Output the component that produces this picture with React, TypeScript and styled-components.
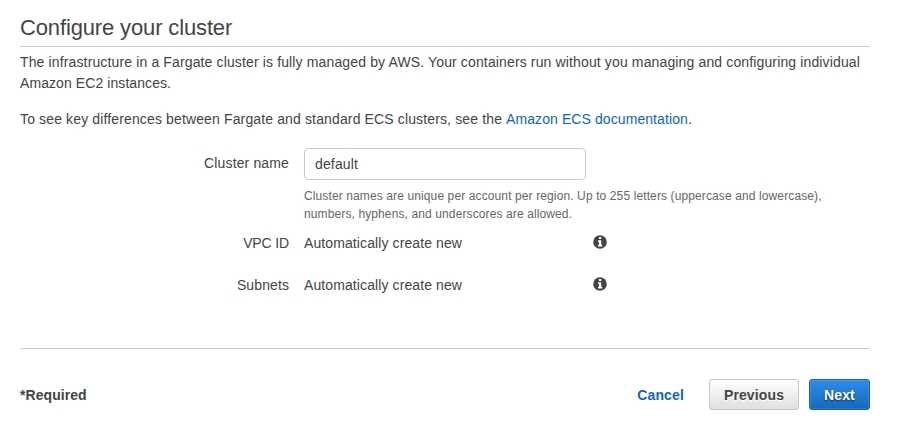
import React from "react";
import styled, { createGlobalStyle } from "styled-components";

const Global = createGlobalStyle`
  * { box-sizing: border-box; }
  body { margin: 0; background: #fff; overflow: hidden; }
`;
const Page = styled.main`
  width: 870px;
  height: 429px;
  padding: 15px 0 0 20px;
  font: 14px/21px "Liberation Sans", Arial, sans-serif;
  color: #444;
`;
const Title = styled.h1`
  margin: 0;
  height: 32px;
  font-size: 22px;
  line-height: 26px;
  font-weight: 400;
  letter-spacing: -0.14px;
  border-bottom: 1px solid #ccc;
`;
const Intro = styled.p<{ $gap: number }>`
  margin: ${(p) => p.$gap}px 0 0;
  letter-spacing: 0.136px;
`;
const Tracked = styled.span<{ $tracking: number }>`
  letter-spacing: ${(p) => p.$tracking}px;
`;
const Link = styled.a`
  color: #0f66bd;
  text-decoration: none;
  letter-spacing: 0.085px;
`;
const Form = styled.form`
  margin: 18px 0 0;
`;
const Row = styled.div<{ $height: number }>`
  display: grid;
  grid-template-columns: 269px 282px 1fr;
  grid-template-rows: max-content;
  align-content: start;
  column-gap: 15px;
  height: ${(p) => p.$height}px;
`;
const Label = styled.label<{ $top?: number; $tracking: number }>`
  text-align: right;
  padding-top: ${(p) => p.$top ?? 0}px;
  letter-spacing: ${(p) => p.$tracking}px;
`;
const Value = styled.span`
  letter-spacing: 0.1px;
`;
const Input = styled.input`
  width: 282px;
  height: 32px;
  padding: 0 10px;
  border: 1px solid #ccc;
  border-radius: 4px;
  font: inherit;
  letter-spacing: 0.14px;
  color: #444;
  outline: none;
`;
const Hint = styled.div`
  grid-column: 2 / 4;
  margin-top: 7px;
  width: 540px;
  font-size: 12px;
  line-height: 18px;
  letter-spacing: 0.115px;
  color: #666;
`;
const InfoCell = styled.span`
  padding-top: 2px;
  margin-left: -8px;
`;
const InfoSvg = styled.svg`
  display: block;
`;
const Footer = styled.footer`
  display: flex;
  align-items: center;
  height: 92px;
  border-top: 1px solid #ccc;
  font-weight: 700;
`;
const Required = styled.span`
  flex: 1;
  padding-top: 2px;
  letter-spacing: 0.06px;
`;
const Cancel = styled(Link)`
  margin-right: 25px;
  padding-top: 2px;
  letter-spacing: 0.14px;
`;
const Button = styled.button<{ $primary?: boolean }>`
  height: 31px;
  width: ${(p) => (p.$primary ? 61 : 90)}px;
  margin-left: ${(p) => (p.$primary ? 10 : 0)}px;
  padding: 2px 0 0;
  border: 1px solid ${(p) => (p.$primary ? "#1862b0" : "#c5c5c5")};
  border-radius: 3px;
  background: ${(p) => (p.$primary ? "linear-gradient(#2e8de9, #1568bd)" : "linear-gradient(#fff, #e0e0e0)")};
  box-shadow: ${(p) => (p.$primary ? "inset 0 0 0 1px rgba(255,255,255,.1)" : "none")};
  color: ${(p) => (p.$primary ? "#fff" : "#444")};
  text-shadow: ${(p) => (p.$primary ? "0 1px 2px rgba(0,0,0,.65)" : "0 1px 0 #fff")};
  font: bold 14px/21px "Liberation Sans", Arial, sans-serif;
  letter-spacing: 0.12px;
`;

function Info() {
  return (
    <InfoCell>
      <InfoSvg width="14" height="14" viewBox="0 0 14 14">
        <circle cx="7" cy="7" r="6.8" fill="#444" />
        <path d="M6 2h2.2v2H6zM5 5.2h3.2v4.6h1V11.5H5V9.8h1V6.9H5z" fill="#fff" />
      </InfoSvg>
    </InfoCell>
  );
}

export default function App() {
  return (
    <Page>
      <Global />
      <Title>Configure your cluster</Title>
      <Intro $gap={5}>
        The infrastructure in a Fargate cluster is fully managed by AWS. Your containers run without you managing and configuring individual{" "}
        <Tracked $tracking={0.08}>Amazon EC2 instances.</Tracked>
      </Intro>
      <Intro $gap={15}>
        To see key differences between Fargate and standard ECS clusters, see the <Link>Amazon ECS documentation</Link>.
      </Intro>
      <Form>
        <Row $height={85}>
          <Label $top={5} $tracking={0.14}>Cluster name</Label>
          <Input defaultValue="default" />
          <Hint>Cluster names are unique per account per region. Up to 255 letters (uppercase and lowercase), numbers, hyphens, and underscores are allowed.</Hint>
        </Row>
        <Row $height={42}>
          <Label $tracking={-0.14}>VPC ID</Label>
          <Value>Automatically create new</Value>
          <Info />
        </Row>
        <Row $height={73}>
          <Label $tracking={0.1}>Subnets</Label>
          <Value>Automatically create new</Value>
          <Info />
        </Row>
      </Form>
      <Footer>
        <Required>*Required</Required>
        <Cancel>Cancel</Cancel>
        <Button type="button">Previous</Button>
        <Button type="button" $primary>Next</Button>
      </Footer>
    </Page>
  );
}
